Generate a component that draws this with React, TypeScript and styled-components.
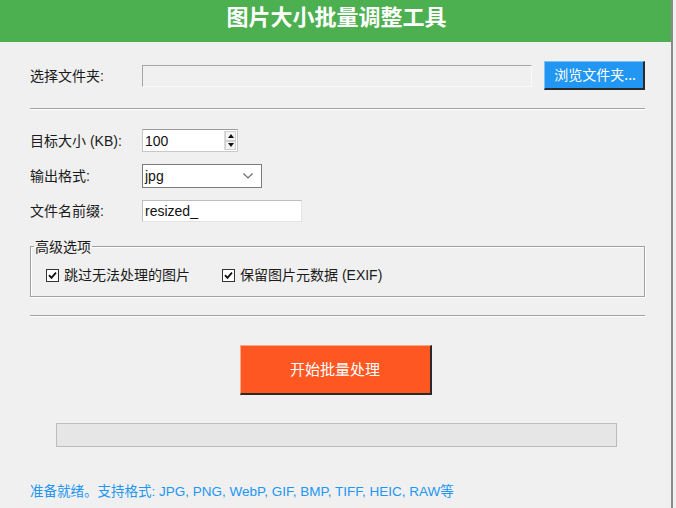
import React, { useState } from 'react';
import styled, { createGlobalStyle } from 'styled-components';

const GlobalStyle = createGlobalStyle`
  html, body {
    margin: 0;
    padding: 0;
    background: #f0f0f0;
  }
  body {
    font-family: "Liberation Sans", "Noto Sans CJK SC", sans-serif;
    font-size: 14px;
    color: #1a1a1a;
  }
`;

const FORMATS = 'JPG, PNG, WebP, GIF, BMP, TIFF, HEIC, RAW';

function App() {
  const [size, setSize] = useState<number>(100);
  const [skipBad, setSkipBad] = useState<boolean>(true);
  const [keepExif, setKeepExif] = useState<boolean>(true);

  return (
    <Window>
      <GlobalStyle />
      <Header>图片大小批量调整工具</Header>
      <Body>
        <FolderRow>
          <Label>选择文件夹:</Label>
          <FolderInput readOnly value="" />
          <BrowseButton>浏览文件夹...</BrowseButton>
        </FolderRow>

        <Separator $top={18} />

        <FieldRow $top={19}>
          <Label>目标大小 (KB):</Label>
          <Spinbox>
            <SpinValue value={size} onChange={(e) => setSize(Number(e.target.value) || 0)} />
            <SpinArrows>
              <SpinArrow onClick={() => setSize(size + 10)}>
                <Triangle $dir="up" />
              </SpinArrow>
              <SpinArrow onClick={() => setSize(Math.max(0, size - 10))}>
                <Triangle $dir="down" />
              </SpinArrow>
            </SpinArrows>
          </Spinbox>
        </FieldRow>

        <FieldRow $top={12}>
          <Label>输出格式:</Label>
          <Combo>
            <span>jpg</span>
            <svg width="12" height="8" viewBox="0 0 12 8">
              <path d="M1.5 1.5 L6 6 L10.5 1.5" fill="none" stroke="#6b6b6b" strokeWidth="1.2" />
            </svg>
          </Combo>
        </FieldRow>

        <FieldRow $top={12}>
          <Label>文件名前缀:</Label>
          <PrefixInput defaultValue="resized_" />
        </FieldRow>

        <Group>
          <Legend>高级选项</Legend>
          <CheckRow>
            <CheckItem onClick={() => setSkipBad(!skipBad)}>
              <CheckBox>{skipBad && <CheckMark />}</CheckBox>
              跳过无法处理的图片
            </CheckItem>
            <CheckItem onClick={() => setKeepExif(!keepExif)}>
              <CheckBox>{keepExif && <CheckMark />}</CheckBox>
              保留图片元数据 (EXIF)
            </CheckItem>
          </CheckRow>
        </Group>

        <Separator $top={18} />

        <StartButton>开始批量处理</StartButton>

        <Progress>
          <ProgressFill style={{ width: '0%' }} />
        </Progress>

        <Status>准备就绪。支持格式: {FORMATS}等</Status>
      </Body>
    </Window>
  );
}

function CheckMark() {
  return (
    <svg width="9" height="9" viewBox="0 0 9 9">
      <path d="M1 4.2 L3.4 6.8 L8 1.6" fill="none" stroke="#111" strokeWidth="1.8" />
    </svg>
  );
}

export default App;

const Window = styled.div`
  width: 673px;
  height: 508px;
  box-sizing: border-box;
  border-right: 2px solid #8a8a8a;
  background: #f0f0f0;
  display: flex;
  flex-direction: column;
  overflow: hidden;
`;

const Header = styled.div`
  height: 42px;
  flex-shrink: 0;
  background: #4caf50;
  color: #fff;
  font-family: "Noto Sans CJK SC", sans-serif;
  font-weight: 700;
  font-size: 22px;
  line-height: 31px;
  text-align: center;
  padding-left: 2px;
`;

const Body = styled.div`
  display: flex;
  flex-direction: column;
  padding: 0 26px 0 30px;
`;

const Label = styled.span`
  width: 112px;
  flex-shrink: 0;
  line-height: 20px;
`;

const FolderRow = styled.div`
  display: flex;
  align-items: center;
  margin-top: 19px;
  height: 29px;
`;

const sunken = `
  border-top: 1px solid #a6a6a6;
  border-left: 1px solid #a6a6a6;
  border-bottom: 1px solid #fafafa;
  border-right: 1px solid #fafafa;
`;

const FolderInput = styled.input`
  ${sunken}
  width: 391px;
  height: 22px;
  box-sizing: border-box;
  background: #f0f0f0;
  outline: none;
  padding: 0 3px;
  font: inherit;
`;

const BrowseButton = styled.button`
  margin-left: 12px;
  width: 101px;
  height: 29px;
  box-sizing: border-box;
  background: #2196f3;
  color: #fff;
  font-family: "Noto Sans CJK SC", sans-serif;
  font-size: 14px;
  line-height: 20px;
  padding: 0 0 2px 2px;
  border-top: 1px solid #7ec2f8;
  border-left: 1px solid #7ec2f8;
  border-right: 2px solid #2a2a2a;
  border-bottom: 2px solid #2a2a2a;
  white-space: nowrap;
`;

const Separator = styled.hr<{ $top: number }>`
  margin: ${(p) => p.$top}px 0 0;
  width: 615px;
  height: 0;
  border: none;
  border-top: 1px solid #a0a0a0;
  border-bottom: 1px solid #ffffff;
`;

const FieldRow = styled.div<{ $top: number }>`
  display: flex;
  align-items: center;
  margin-top: ${(p) => p.$top}px;
`;

const Spinbox = styled.div`
  display: flex;
  width: 96px;
  height: 23px;
  box-sizing: border-box;
  background: #fff;
  border: 1px solid #c8c8c8;
  border-top-color: #9a9a9a;
`;

const SpinValue = styled.input`
  flex: 1;
  min-width: 0;
  border: none;
  outline: none;
  padding: 0 2px;
  background: transparent;
  font: inherit;
  color: #111;
`;

const SpinArrows = styled.div`
  width: 11px;
  margin: 1px 1px 1px 0;
  display: flex;
  flex-direction: column;
  border-left: 1px solid #dcdcdc;
`;

const SpinArrow = styled.div`
  flex: 1;
  display: flex;
  align-items: center;
  justify-content: center;
  background: #f4f4f4;
  border: 1px solid #d0d0d0;
`;

const Triangle = styled.span<{ $dir: 'up' | 'down' }>`
  width: 0;
  height: 0;
  border-left: 3px solid transparent;
  border-right: 3px solid transparent;
  ${(p) =>
    p.$dir === 'up'
      ? 'border-bottom: 4px solid #111;'
      : 'border-top: 4px solid #111;'}
`;

const Combo = styled.div`
  display: flex;
  align-items: center;
  justify-content: space-between;
  width: 120px;
  height: 24px;
  box-sizing: border-box;
  background: #fff;
  border: 1px solid #7a7a7a;
  padding: 0 7px 0 2px;
  color: #111;

  & span {
    line-height: 20px;
  }
`;

const PrefixInput = styled.input`
  width: 160px;
  height: 22px;
  box-sizing: border-box;
  background: #fff;
  border: 1px solid #e4e4e4;
  border-top-color: #bdbdbd;
  border-left-color: #bdbdbd;
  outline: none;
  padding: 0 2px;
  font: inherit;
  color: #111;
`;

const Group = styled.fieldset`
  margin: 15px 0 0;
  width: 615px;
  height: 60px;
  box-sizing: border-box;
  padding: 0 0 0 15px;
  border: 1px solid #a0a0a0;
  box-shadow: inset 1px 1px 0 #fff, 1px 1px 0 #fff;
`;

const Legend = styled.legend`
  margin-left: -12px;
  padding: 0 1px;
  line-height: 18px;
  font-family: "Noto Sans CJK SC", sans-serif;
  font-size: 14px;
`;

const CheckRow = styled.div`
  display: flex;
  margin-top: 10px;
`;

const CheckItem = styled.label`
  display: flex;
  align-items: center;
  gap: 5px;
  width: 176px;
  line-height: 20px;
  cursor: default;
`;

const CheckBox = styled.span`
  width: 13px;
  height: 13px;
  box-sizing: border-box;
  background: #fff;
  border: 1px solid #333;
  display: flex;
  align-items: center;
  justify-content: center;
`;

const StartButton = styled.button`
  align-self: center;
  margin: 28px 0 0 -4px;
  width: 192px;
  height: 50px;
  box-sizing: border-box;
  background: #ff5722;
  color: #fff;
  font-family: "Noto Sans CJK SC", sans-serif;
  font-size: 15px;
  border-top: 1px solid #ffa587;
  border-left: 1px solid #ffa587;
  border-right: 2px solid #2a2a2a;
  border-bottom: 2px solid #2a2a2a;
  padding: 0 0 3px;
`;

const Progress = styled.div`
  margin: 28px 0 0 26px;
  width: 561px;
  height: 24px;
  box-sizing: border-box;
  background: #e6e6e6;
  border: 1px solid #bcbcbc;
`;

const ProgressFill = styled.div`
  height: 100%;
  background: #06b025;
`;

const Status = styled.div`
  margin-top: 35px;
  color: #2196f3;
  font-size: 13.5px;
  line-height: 20px;
  white-space: nowrap;
`;
